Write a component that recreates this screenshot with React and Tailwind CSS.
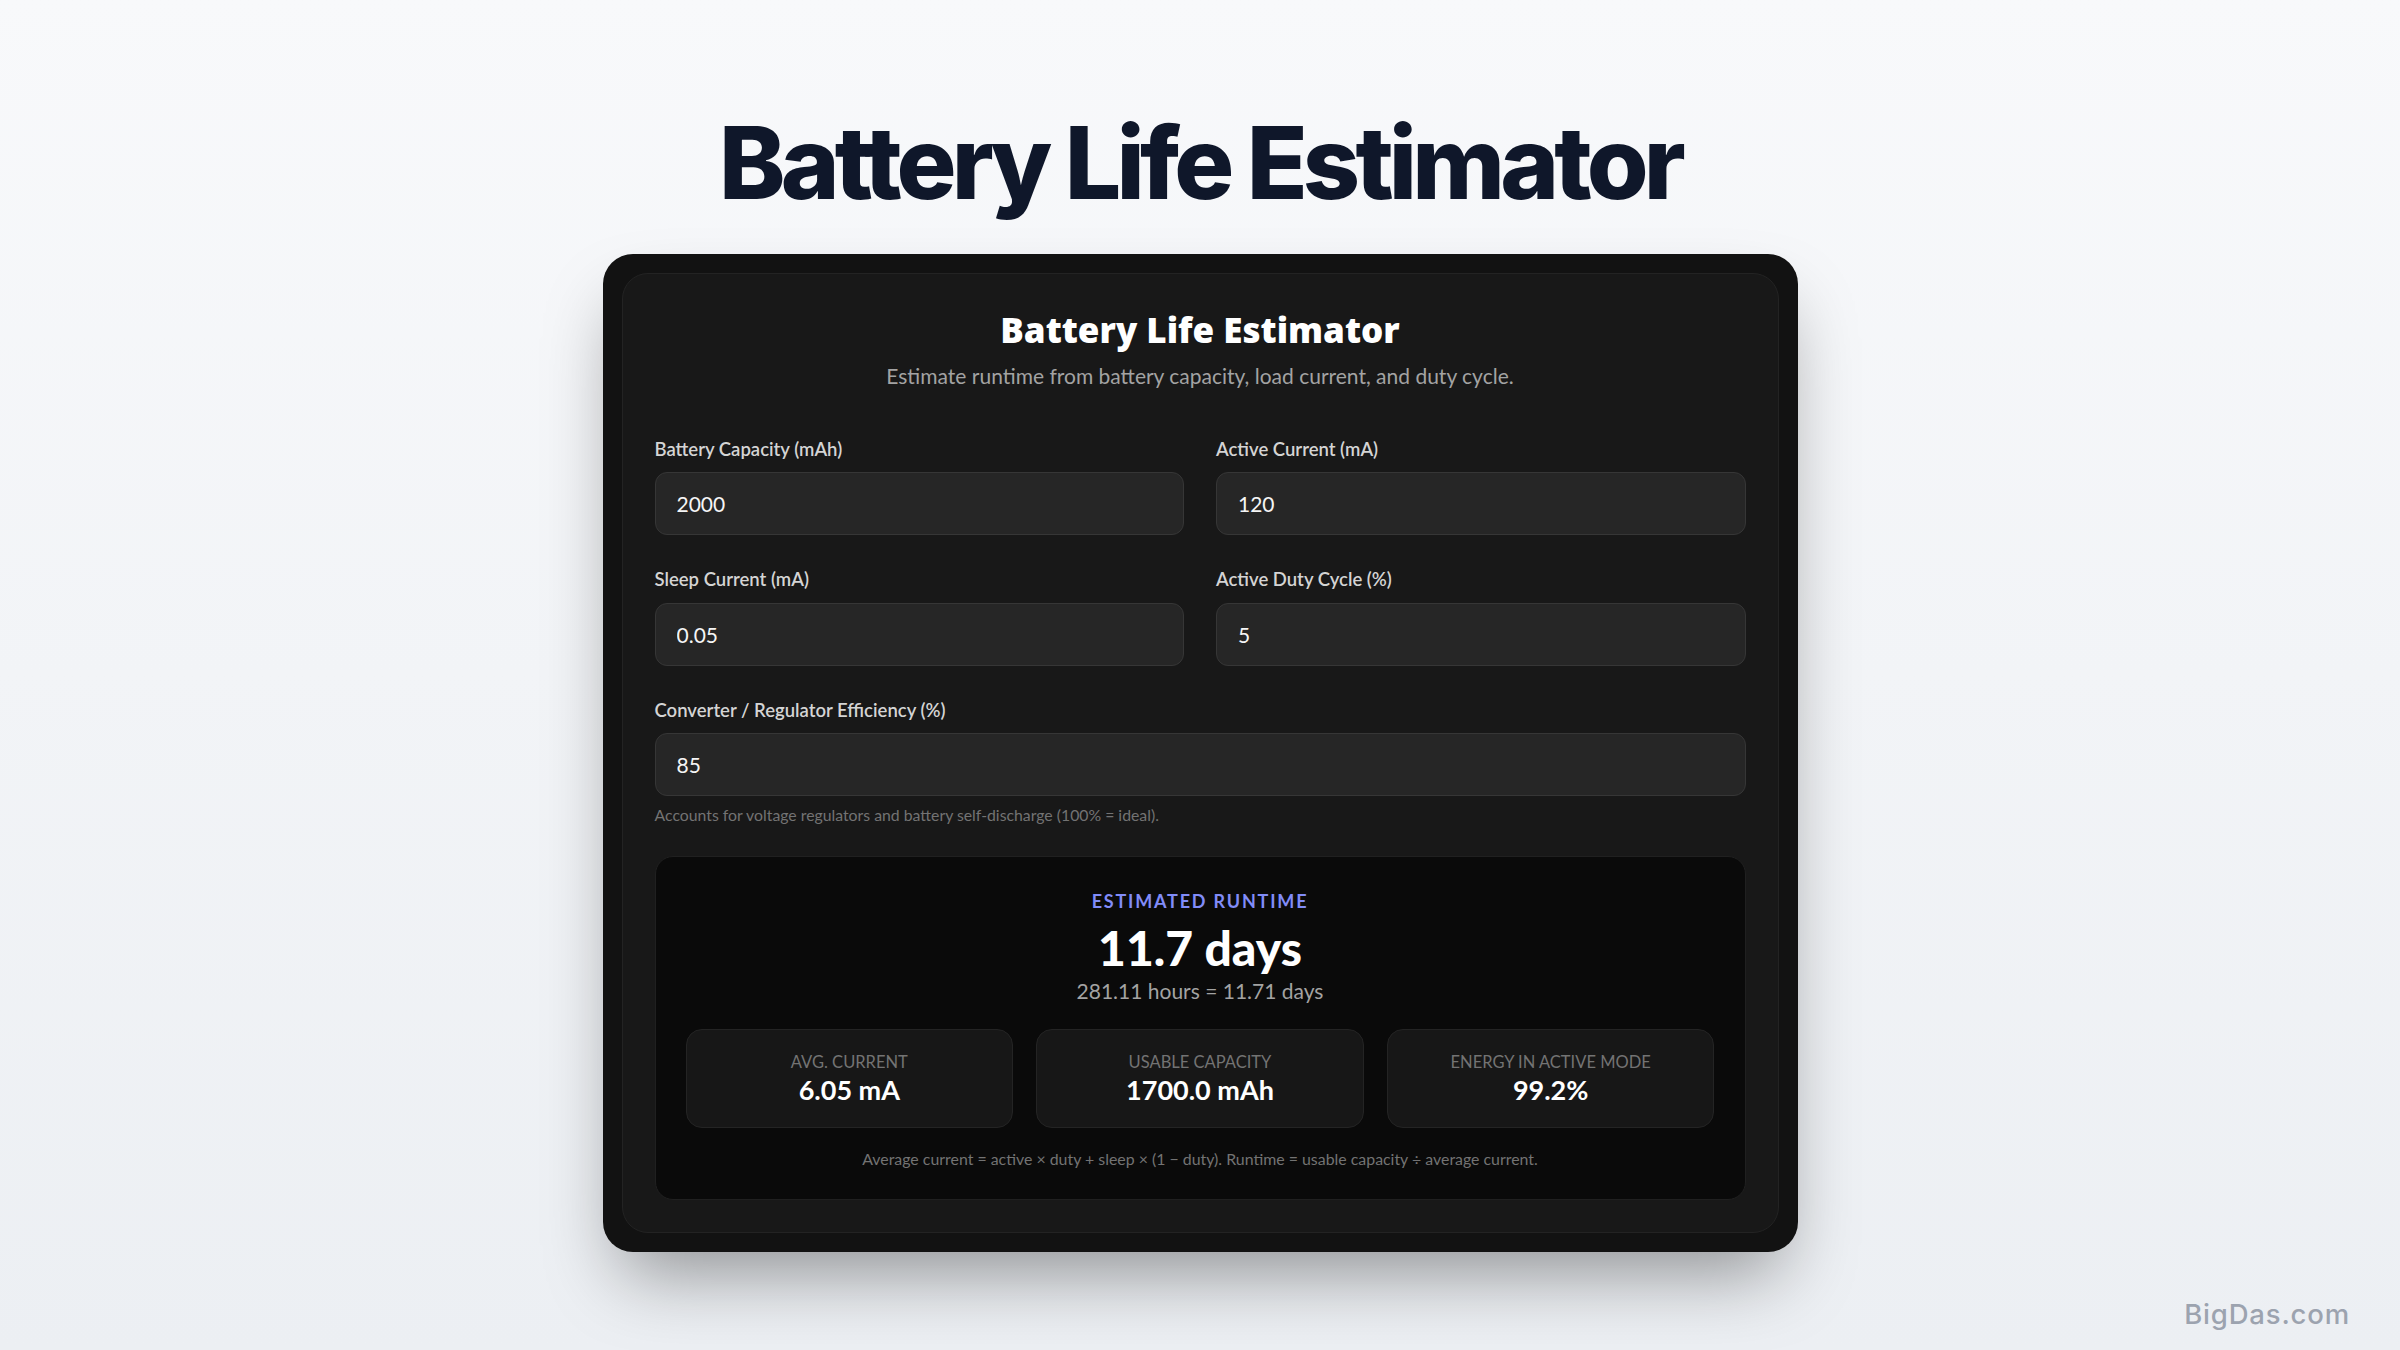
import { useState } from 'react';

const body = '[font-family:Lato,"Noto_Sans",sans-serif]';

function Field({ label, value, onChange }) {
  return (
    <div className="flex flex-col">
      <label className="text-[18.5px] leading-[28px] font-semibold text-[#d4d4d4] mb-[9.5px]">{label}</label>
      <input
        type="text"
        inputMode="decimal"
        value={value}
        onChange={(e) => onChange(e.target.value)}
        className="h-[63px] w-full rounded-[12px] border border-[#363636] bg-[#262626] pl-[21px] pr-4 text-[21px] text-[#f5f5f5] outline-none"
      />
    </div>
  );
}

function Stat({ label, value }) {
  return (
    <div className="flex flex-col items-center rounded-[16px] border border-[#242424] bg-[#171717] pt-[20px] pb-[21px]">
      <span className="text-[16.5px] leading-[24px] uppercase text-[#737373]">{label}</span>
      <span className="text-[27px] leading-[32px] font-bold text-white">{value}</span>
    </div>
  );
}

export default function App() {
  const [v, setV] = useState({ capacity: '2000', active: '120', sleep: '0.05', duty: '5', eff: '85' });
  const set = (k) => (val) => setV({ ...v, [k]: val });

  // avg = active*duty + sleep*(1-duty), runtime = usable / avg
  const duty = parseFloat(v.duty) / 100 || 0;
  const activePart = (parseFloat(v.active) || 0) * duty;
  const avg = activePart + (parseFloat(v.sleep) || 0) * (1 - duty);
  const usable = (parseFloat(v.capacity) || 0) * ((parseFloat(v.eff) || 0) / 100);
  const hours = avg > 0 ? usable / avg : 0;
  const days = hours / 24;
  const activeShare = avg > 0 ? (activePart / avg) * 100 : 0;

  return (
    <div className="relative min-h-screen w-full flex flex-col items-center bg-gradient-to-b from-[#f8f9fb] to-[#eceff3] pt-[113px] pb-[90px]">
      <h1 className="[font-family:Inter,sans-serif] text-[100px] leading-none font-extrabold tracking-[-0.048em] text-[#0f172a]">
        Battery Life Estimator
      </h1>

      <div className="mt-[41px] w-[1195px] rounded-[30px] bg-[#121212] p-[19px] shadow-[0_38px_75px_-18px_rgba(0,0,0,0.4)]">
        <div className={`${body} rounded-[26px] border border-[#232323] bg-[#181818] p-[32px]`}>
          <div className="flex flex-col items-center">
            <h2 className="[font-family:'Open_Sans',sans-serif] text-[35px] leading-[48px] font-extrabold text-white">
              Battery Life Estimator
            </h2>
            <p className="mt-[7px] text-[21px] leading-[30px] text-[#a3a3a3]">
              Estimate runtime from battery capacity, load current, and duty cycle.
            </p>
          </div>

          <div className="mt-[43.5px] grid grid-cols-2 gap-x-[32px] gap-y-[30px]">
            <Field label="Battery Capacity (mAh)" value={v.capacity} onChange={set('capacity')} />
            <Field label="Active Current (mA)" value={v.active} onChange={set('active')} />
            <Field label="Sleep Current (mA)" value={v.sleep} onChange={set('sleep')} />
            <Field label="Active Duty Cycle (%)" value={v.duty} onChange={set('duty')} />
            <div className="col-span-2">
              <Field label="Converter / Regulator Efficiency (%)" value={v.eff} onChange={set('eff')} />
              <p className="mt-[7px] text-[15.8px] leading-[24px] text-[#737373]">
                Accounts for voltage regulators and battery self-discharge (100% = ideal).
              </p>
            </div>
          </div>

          <div className="mt-[28.5px] rounded-[18px] border border-[#202020] bg-[#0a0a0a] px-[30px] pt-[31px] pb-[28px]">
            <div className="flex flex-col items-center">
              <span className="text-[18px] leading-[27px] font-bold tracking-[0.1em] text-[#818cf8]">ESTIMATED RUNTIME</span>
              <span className="mt-[6px] text-[48px] leading-[53px] font-black text-white">{days.toFixed(1)} days</span>
              <span className="mt-[2px] text-[21px] leading-[30px] text-[#a3a3a3]">
                {hours.toFixed(2)} hours = {days.toFixed(2)} days
              </span>
            </div>

            <div className="mt-[23px] grid grid-cols-3 gap-[23px]">
              <Stat label="Avg. Current" value={`${avg.toFixed(2)} mA`} />
              <Stat label="Usable Capacity" value={`${usable.toFixed(1)} mAh`} />
              <Stat label="Energy in Active Mode" value={`${activeShare.toFixed(1)}%`} />
            </div>

            <p className="mt-[19.5px] text-center text-[15.9px] leading-[24px] text-[#737373]">
              Average current = active × duty + sleep × (1 − duty). Runtime = usable capacity ÷ average current.
            </p>
          </div>
        </div>
      </div>

      <span className="absolute right-[50px] bottom-[15px] [font-family:Inter,sans-serif] text-[27.5px] font-medium tracking-[0.03em] text-[#9ca3af]">
        BigDas.com
      </span>
    </div>
  );
}
